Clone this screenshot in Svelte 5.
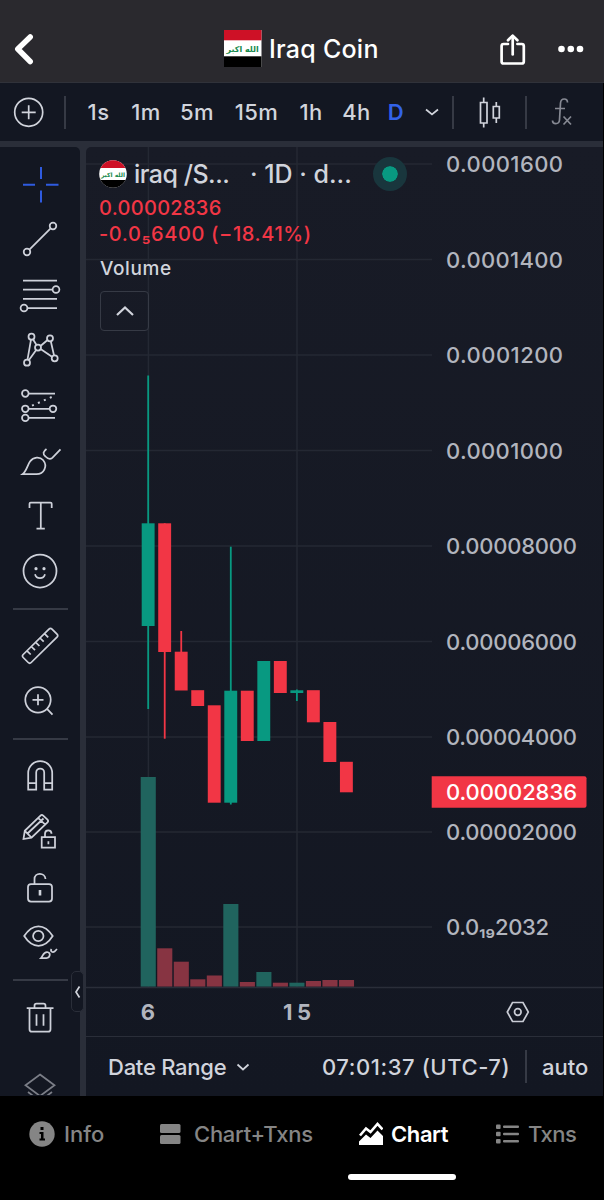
<script>
  const intervals = [
    { label: '1s', width: 51 },
    { label: '1m', width: 44 },
    { label: '5m', width: 58 },
    { label: '15m', width: 61 },
    { label: '1h', width: 48 },
    { label: '4h', width: 43 },
    { label: 'D', width: 36, active: true },
  ];

  const priceLabels = [
    { text: '0.0001600', y: 17, w: 117 },
    { text: '0.0001400', y: 112.5, w: 117 },
    { text: '0.0001200', y: 208, w: 117 },
    { text: '0.0001000', y: 303.5, w: 117 },
    { text: '0.00008000', y: 399, w: 131 },
    { text: '0.00006000', y: 494.5, w: 131 },
    { text: '0.00004000', y: 590, w: 131 },
    { text: '0.00002000', y: 685, w: 131 },
    { text: '0.0₁₉2032', y: 780, w: 103 },
  ];

  // top / bottom of body, high / low of wick, top of volume bar
  const candles = [
    { up: true, top: 376.3, bottom: 479, high: 228.5, low: 562, vol: 630 },
    { up: false, top: 376.3, bottom: 505, high: 376.3, low: 591.7, vol: 801.3 },
    { up: false, top: 504.7, bottom: 543.5, high: 484, low: 543, vol: 814.7 },
    { up: false, top: 543.2, bottom: 559, high: 544, low: 558, vol: 832.3 },
    { up: false, top: 558.3, bottom: 655.7, high: 560, low: 655, vol: 828.5 },
    { up: true, top: 543.7, bottom: 655.7, high: 399.7, low: 657.5, vol: 757 },
    { up: false, top: 543.7, bottom: 594, high: 544, low: 593, vol: 835 },
    { up: true, top: 514, bottom: 594, high: 515, low: 593, vol: 825 },
    { up: false, top: 514, bottom: 546, high: 515, low: 545, vol: 835.7 },
    { up: true, top: 543.3, bottom: 546, high: 542.5, low: 554, vol: 835.7 },
    { up: false, top: 543.2, bottom: 575.3, high: 544, low: 575, vol: 834 },
    { up: false, top: 575, bottom: 615, high: 576, low: 614, vol: 833 },
    { up: false, top: 614.8, bottom: 645.3, high: 615, low: 645, vol: 833 },
  ].map((c, i) => ({ ...c, x: 62.2 + i * 16.52 }));
</script>

<div class="app">
  <header>
    <svg class="back" width="24" height="36" viewBox="0 0 24 36"><path d="M17.200 6 4.800 18 17.200 30.500" /></svg>
    <div class="title">
      <svg width="38" height="37" viewBox="0 0 38 37">
        <rect width="37.500" height="37" fill="#fff" />
        <rect width="37.500" height="10.300" fill="#ce1126" />
        <rect y="26.300" width="37.500" height="10.700" fill="#000" />
        <text class="takbir" x="18.700" y="21.500" text-anchor="middle" font-size="8">الله اكبر</text>
      </svg>
      <span>Iraq Coin</span>
    </div>
    <svg class="share" width="28" height="34" viewBox="0 0 28 34">
      <path d="M9 12H4.600a2 2 0 0 0-2 2v15.500a2 2 0 0 0 2 2h18.200a2 2 0 0 0 2-2V14a2 2 0 0 0-2-2H18.400" /><path d="M13.700 22.500V4" /><path d="M9 8.200 13.700 3.600l4.700 4.600" />
    </svg>
    <svg class="dots" width="28" height="10" viewBox="0 0 28 10"><circle cx="4.500" cy="5" r="3.300" /><circle cx="13.800" cy="5" r="3.300" /><circle cx="23" cy="5" r="3.300" /></svg>
  </header>

  <div class="toolbar">
    <div class="cell" style="width:57px"><svg width="32" height="32" viewBox="0 0 32 32"><circle cx="15.700" cy="16.300" r="14" /><path d="M15.700 9.300v14M8.700 16.300h14" /></svg></div>
    <div class="cell" style="width:16px"><i></i></div>
    {#each intervals as item}
      <div class="cell label" class:active={item.active} style="width:{item.width}px">{item.label}</div>
    {/each}
    <div class="cell" style="width:35px"><svg width="16" height="10" viewBox="0 0 16 10"><path d="m2 2.500 6 5 6-5" /></svg></div>
    <div class="cell" style="width:7px"><i></i></div>
    <div class="cell" style="width:68px">
      <svg width="24" height="34" viewBox="0 0 24 34"><path d="M2.500 7.500h6.500v20.500h-6.500zM5.700 2.500v5M5.700 28v4.500M15.300 11.500h6v11.500h-6zM18.300 7v4.500M18.300 23v5" /></svg>
    </div>
    <div class="cell" style="width:3px"><i></i></div>
    <div class="cell fx" style="width:70px">
      <svg width="24" height="30" viewBox="0 0 24 30"><path d="M17.500 5.500C17.500 1 11 .500 10.500 6L9.500 23c-.500 5-7 4.500-7 .500M5 11.500h10M13.500 19.500l7.500 8M21 19.500l-7.500 8" /></svg>
    </div>
  </div>

  <main>
    <aside>
      <svg class="tool blue" viewBox="-28 -28 56 56"><path d="M1-17V-5M1 6.500V18.500M-17 .800H-5M6 .800H18.500" /></svg>
      <svg class="tool" viewBox="-28 -28 56 56"><circle cx="13" cy="-13" r="3.300" /><circle cx="-13" cy="13" r="3.300" /><path d="M-10.600 10.600 10.600-10.600" /></svg>
      <svg class="tool" viewBox="-28 -28 56 56"><path d="M-17-14.500H17M-17-5.500H12.500M-17 3.800H17M-12.500 13H17" /><circle cx="16" cy="-5.500" r="3.400" /><circle cx="-16" cy="13" r="3.400" /></svg>
      <svg class="tool" viewBox="-28 -28 56 56"><circle cx="-8.500" cy="-13.300" r="3" /><circle cx="10" cy="-11.700" r="3" /><circle cx="-2" cy="-2.500" r="3" /><circle cx="-13" cy="12.700" r="3" /><circle cx="14.700" cy="8.300" r="3" /><path d="M-9-10.300-12.500 9.700M-7-10.700-3.500-5M.500-4 7.500-10M10.800-8.800 14 5.300M.600-.900 12 6.700M-3.800 0-11.200 10.300" /></svg>
      <svg class="tool" viewBox="-28 -28 56 56"><circle cx="-14.700" cy="-11.500" r="3.300" /><circle cx="-14.700" cy="3.800" r="3.300" /><circle cx="13" cy="3.800" r="3.300" /><circle cx="-14.700" cy="12.900" r="3.300" /><path d="M-11.400-11.500H15M-11.400 3.800H9.700M-11.400 12.900H15" /><path stroke-dasharray="2 4.500" stroke-width="2" d="M-8 .700 12.800-8.500" /></svg>
      <svg class="tool" viewBox="-28 -28 56 56"><path d="M-17.500 13.200C-13.500 10-12.500 4-10 .500-6.500-4.500 0-4.500 3-1 8 5 4 13.200-3.500 13.200ZM20.500-11.700 12.300-3.200C10-1.300 8-2 5.500-4.500 2.500-7 3-9.500 6.500-12" /></svg>
      <svg class="tool" viewBox="-28 -28 56 56"><path d="M-10.500-8V-12.300Q-10.500-13.500-9.300-13.500H10.500Q11.700-13.500 11.700-12.300V-8M.800-13.500V12.700M-3.500 12.700H4.800" /></svg>
      <svg class="tool" viewBox="-28 -28 56 56"><circle r="16.500" /><circle class="fill" cx="-4" cy="-2.300" r="1.600" /><circle class="fill" cx="4" cy="-2.300" r="1.600" /><path d="M-5 3.300C-3.500 8.500 3.500 8.500 5 3.300" /></svg>
      <hr />
      <svg class="tool" viewBox="-28 -28 56 56"><path d="M9-16.800Q10.500-18.300 12-16.800L17-11.800Q18.500-10.300 17-8.800L-8.800 16.500Q-10.300 18-11.800 16.500L-16.800 11.500Q-18.300 10-16.800 8.500ZM-13 4.800-9.300 8.500M-8.700.500-5 4.200M-4.300-3.700-.600 0M0-8 3.700-4.300M4.500-12.400 8.200-8.700" /></svg>
      <svg class="tool" viewBox="-28 -28 56 56"><circle cx="-2" cy="-2.200" r="12.700" /><path d="M-7.500-2.200h11M-2-7.700v11M7 6.800 12.500 12.700" /></svg>
      <hr />
      <svg class="tool" viewBox="-28 -28 56 56"><path d="M-11.800 13.500V-3a12 12 0 0 1 24 0V13.500H4.200V-3.500a4 4 0 0 0-8 0V13.500ZM-11.800 7h8M4.200 7h8" /></svg>
      <svg class="tool" viewBox="-28 -28 56 56"><path d="M-16.500 7-15.200-1.200 .500-16.400Q1.800-17.700 3.200-16.400L7.500-12.400Q8.800-11 7.500-9.700L-8.500 5.700ZM-15.200-1.200-8.500 5.700M-12.500 1.500 3.500-13.500M-2-14.200 5.500-7.200M1.700 5.200h13.300v10.300H1.700ZM5 5.200V1.700C5-2.800 11.500-2.800 11.500 1.700M8.400 9.200v3" /></svg>
      <svg class="tool" viewBox="-28 -28 56 56"><rect x="-12" y="-3" width="24" height="17.500" rx="3" /><path d="M-5.500-3V-8C-5.500-15 5-15 5.500-8" /><rect class="fill" x="-1.300" y="3" width="2.600" height="5.500" /></svg>
      <svg class="tool" viewBox="-28 -28 56 56"><path d="M-15.800-6C-7.500-19 4.500-19 12.700-6 4.500 7-7.500 7-15.800-6Z" /><circle cx="-1.700" cy="-6" r="5.200" /><path d="M1 16C3.500 13.500 3 10 7 10 11.500 10.500 10 16 6.500 16ZM17 7 14.500 9.500C12.500 11 10 9 11.500 7" /></svg>
      <hr />
      <svg class="tool" viewBox="-28 -28 56 56"><path d="M-13.300-8.800H13.500M-5.500-8.800V-11.300Q-5.500-13.300-3.500-13.300H3.500Q5.500-13.300 5.500-11.300V-8.800M-10.500-8.800V12.200Q-10.500 14.700-8 14.700H8Q10.500 14.700 10.500 12.200V-8.800M-3.500-2.800V8.700M3.500-2.800V8.700" /></svg>
      <svg class="tool faded" viewBox="-28 -28 56 38"><path d="M0-10.500 14.500.300 0 11-14.500.300ZM-12 7 0 16 12 7" /></svg>
      <button class="collapse" aria-label="Collapse"><svg width="8" height="14" viewBox="0 0 8 14"><path d="M5.500 1.500 2 7 5.500 12.500" /></svg></button>
    </aside>

    <section>
      <div class="plot">
        <svg class="chart" width="517" height="889" viewBox="0 0 517 889">
          {#each priceLabels as p}
            <path class="grid" d="M0 {p.y}H346" />
          {/each}
          <path class="grid" d="M62.400 0V840M211 0V840" />
          {#each candles as c}
            <rect x={c.x - 7.5} y={c.vol} width="15.100" height={839.7 - c.vol} fill={c.up ? '#20645e' : '#873442'} />
            <rect x={c.x - 0.9} y={c.high} width="1.800" height={c.low - c.high} fill={c.up ? '#089981' : '#f23645'} />
            <rect x={c.x - 6.5} y={c.top} width="12.900" height={c.bottom - c.top} fill={c.up ? '#089981' : '#f23645'} />
          {/each}
          <path class="axis" d="M0 840.500H517" />
          {#each priceLabels as p}
            <text x="360" y={p.y + 8} textLength={p.w}>{p.text}</text>
          {/each}
          <path fill="#f23645" d="M345.700 629.300H498.500a2 2 0 0 1 2 2V658.700a2 2 0 0 1-2 2H345.700Z" />
          <text class="last" x="360" y="653" textLength="131">0.00002836</text>
          <text class="day" x="62" y="873" text-anchor="middle">6</text>
          <text class="day" x="211" y="873" text-anchor="middle" textLength="28">15</text>
          <path class="nut" d="M421.300 865 426.500 855.500H437L442.300 865 437 874.500H426.500Z" /><circle class="nut" cx="431.800" cy="865" r="3.300" />
        </svg>
        <div class="legend">
          <div class="symbol">
            <svg width="28" height="28" viewBox="0 0 28 28">
              <defs><clipPath id="round"><circle cx="14" cy="14" r="13.800" /></clipPath></defs>
              <g clip-path="url(#round)"><rect width="28" height="28" fill="#fff" /><rect width="28" height="8" fill="#ce1126" /><rect y="20" width="28" height="8" fill="#000" /></g>
              <text class="takbir" x="14" y="16.500" text-anchor="middle" font-size="6">الله اكبر</text>
            </svg>
            <span class="pair">iraq /S...</span><span class="res">· 1D · d...</span><b></b>
          </div>
          <div class="value first">0.00002836</div>
          <div class="value change">-0.0₅6400 (−18.41%)</div>
          <div class="volume">Volume</div>
          <button class="toggle" aria-label="Toggle"><svg width="20" height="12" viewBox="0 0 20 12"><path d="m2 10 8-7.500 8 7.500" /></svg></button>
        </div>
      </div>
      <div class="status">
        <span class="range">Date Range</span>
        <svg width="14" height="10" viewBox="0 0 14 10"><path d="m1.500 2.500 5.500 5 5.500-5" /></svg>
        <span class="clock">07:01:37 (UTC-7)</span>
        <i></i>
        <span class="auto">auto</span>
      </div>
    </section>
  </main>

  <nav>
    <div class="tab t1"><svg width="26" height="26" viewBox="0 0 26 26"><circle cx="13" cy="13" r="12.700" fill="currentColor" /><path fill="#000" d="M11.500 6h3v3h-3zM10.500 11h4v6.500h1.500v2h-5.500v-2h1.500v-4.500h-1.500z" /></svg><span>Info</span></div>
    <div class="tab t2"><svg width="21" height="20" viewBox="0 0 21 20"><rect width="20.500" height="9" rx="1.500" fill="currentColor" /><rect y="11" width="20.500" height="9" rx="1.500" fill="currentColor" /></svg><span>Chart+Txns</span></div>
    <div class="tab t3"><svg width="24" height="24" viewBox="0 0 24 24"><path d="M1 13.500 7 6.500l4.500 3.500L18.500 2 23.500 7.500" fill="none" stroke="currentColor" stroke-width="2.600" /><path fill="currentColor" d="M0 23V19.500L7 12.500l4.500 3.500L18.500 8.500 24 14V23z" /></svg><span>Chart</span></div>
    <div class="tab t4"><svg width="23" height="20" viewBox="0 0 23 20" fill="currentColor">
      {#each [0.5, 7.7, 14.9] as y}<rect {y} width="4.600" height="4.600" rx="1" /><rect x="7" y={y + 1} width="16" height="2.600" rx="1" />{/each}
    </svg><span>Txns</span></div>
  </nav>
</div>

<style>
  :global(body) { background: #000; }
  .app { width: 604px; height: 1200px; overflow: hidden; background: #000; display: flex; flex-direction: column; font-family: Inter, "Liberation Sans", sans-serif; font-weight: 500; color: #d1d4dc; }
  svg { display: block; flex: none; }
  span, .label, .value, .volume { white-space: pre; }
  button { padding: 0; background: #131722; box-sizing: border-box; display: flex; align-items: center; justify-content: center; }
  button svg, .cell svg, .status svg { fill: none; stroke: #d1d4dc; stroke-width: 1.7; }
  .takbir { font-family: "DejaVu Sans", sans-serif; font-weight: 700; fill: #178a4c; }

  header { height: 83px; box-sizing: border-box; padding: 15px 19px 0 13px; display: flex; align-items: center; background: #2a292e; border-bottom: 1px solid #30323a; flex: none; }
  .back, .share { fill: none; stroke: #fff; stroke-width: 5.5; stroke-linecap: round; stroke-linejoin: round; }
  .title { margin-left: 187px; width: 275px; display: flex; align-items: center; color: #fff; font-size: 25px; }
  .title span { margin-left: 7px; letter-spacing: .25px; }
  .share { margin-left: 1px; stroke-width: 2.7; }
  .dots { fill: #fff; margin-left: 30px; }

  .toolbar { height: 58px; margin-right: 1px; display: flex; align-items: center; background: #131722; flex: none; }
  .cell { height: 58px; display: flex; align-items: center; justify-content: center; flex: none; }
  i { width: 2px; height: 33px; background: #363a45; flex: none; }
  .label { font-size: 22px; letter-spacing: .4px; font-weight: 550; }
  .active { color: #3262e8; font-weight: 600; }
  .cell.fx svg { stroke: #868993; }

  main { height: 955px; box-sizing: border-box; margin-right: 1px; padding-top: 6px; background: #2a2e39; display: flex; gap: 6px; flex: none; }
  aside { position: relative; width: 80px; height: 949px; box-sizing: border-box; padding-top: 9.5px; background: #131722; border-radius: 0 5px 0 0; display: flex; flex-direction: column; align-items: center; flex: none; }
  .tool { width: 56px; height: 56px; margin: -.35px 0; fill: none; stroke: #ced1da; stroke-width: 1.75; }
  .tool.blue { stroke: #2f5be0; stroke-width: 2; }
  .tool .fill { fill: #d1d4dc; stroke: none; }
  .tool.faded { height: 38px; stroke: #7b7e87; margin-top: 12px; }
  hr { width: 55px; height: 2px; margin: 8.8px 0; border: 0; background: #363a45; flex: none; }
  .collapse { position: absolute; left: 71px; top: 824px; width: 13px; height: 41px; border: 1.5px solid #2a2e39; border-radius: 5px; }

  section { width: 517px; display: flex; flex-direction: column; background: linear-gradient(#181b26, #131722); border-radius: 5px 0 0 0; overflow: hidden; }
  .plot { position: relative; height: 889px; flex: none; }
  .grid { stroke: #242833; stroke-width: 1.5; }
  .axis { stroke: #2a2e39; stroke-width: 1.5; }
  .nut { fill: none; stroke: #c9ccd5; stroke-width: 1.7; }
  .chart text { font-size: 22px; fill: #b2b5be; }
  .chart .last { fill: #fff; }
  .chart .day { font-weight: 700; }
  .legend { position: absolute; left: 13px; top: 8px; }
  .symbol { height: 38px; display: flex; align-items: center; font-size: 25px; }
  .pair { margin-left: 7px; width: 112px; letter-spacing: -.5px; }
  .res { margin-left: 4px; width: 103px; }
  .symbol b { margin-left: 20px; width: 16px; height: 16px; border: 9px solid #19363d; border-radius: 50%; background: #089981; background-clip: padding-box; flex: none; }
  .value { font-size: 20px; line-height: 26px; color: #f23645; letter-spacing: .3px; }
  .first { margin-top: 2px; }
  .change { letter-spacing: .6px; }
  .volume { font-size: 19px; line-height: 26px; letter-spacing: .6px; margin: 9px 0 0 1px; }
  .toggle { margin: 9px 0 0 1px; width: 49px; height: 40px; border: 1.5px solid #363a45; border-radius: 4px; background: transparent; }
  .toggle svg { stroke-width: 2.2; }

  .status { height: 60px; box-sizing: border-box; border-top: 1px solid #2a2e39; display: flex; align-items: center; padding-left: 22px; font-size: 22px; flex: none; }
  .range { width: 128px; letter-spacing: -.25px; }
  .clock { margin-left: 72px; width: 203px; letter-spacing: .57px; }
  .auto { margin-left: 15px; }

  nav { height: 104px; display: flex; align-items: flex-start; background: #000; color: #858585; font-size: 22px; letter-spacing: -.25px; }
  .tab { position: relative; height: 76px; display: flex; align-items: center; box-sizing: border-box; flex: none; }
  .tab span { margin-left: 9px; }
  .t1 { width: 131px; padding-left: 29px; letter-spacing: 0; }
  .t2 { width: 217px; padding-left: 29px; }
  .t2 span { margin-left: 13px; }
  .t3 { width: 108px; padding-left: 11px; color: #fff; font-weight: 600; letter-spacing: -.4px; }
  .t3 span { margin-left: 8px; }
  .t4 { padding-left: 40px; letter-spacing: -.6px; }
  .t3::after { content: ''; position: absolute; left: 0; top: 77.5px; width: 108px; height: 6px; border-radius: 3px; background: #fff; }
</style>
